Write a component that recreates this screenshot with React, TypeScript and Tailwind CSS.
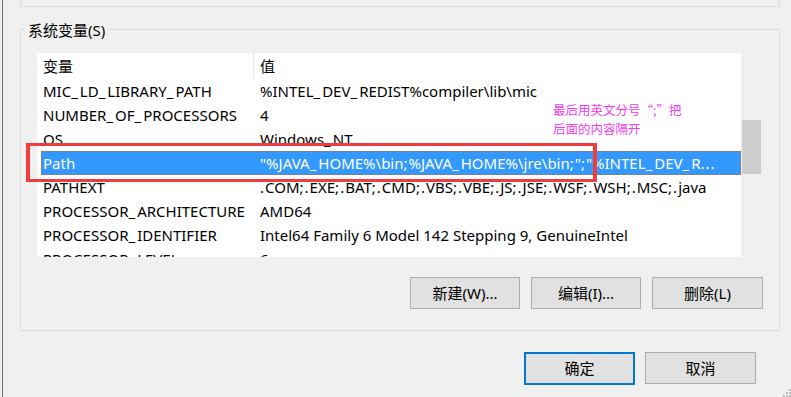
const rows = [
  { name: "MIC_LD_LIBRARY_PATH", value: "%INTEL_DEV_REDIST%compiler\\lib\\mic" },
  { name: "NUMBER_OF_PROCESSORS", value: "4" },
  { name: "OS", value: "Windows_NT" },
  {
    name: "Path",
    value: '"%JAVA_HOME%\\bin;%JAVA_HOME%\\jre\\bin;";"%INTEL_DEV_R...',
    selected: true,
  },
  { name: "PATHEXT", value: ".COM;.EXE;.BAT;.CMD;.VBS;.VBE;.JS;.JSE;.WSF;.WSH;.MSC;.java" },
  { name: "PROCESSOR_ARCHITECTURE", value: "AMD64" },
  { name: "PROCESSOR_IDENTIFIER", value: "Intel64 Family 6 Model 142 Stepping 9, GenuineIntel" },
  { name: "PROCESSOR_LEVEL", value: "6" },
];

// the dialog font sets . ; _ wider than Noto Sans does
function Txt({ s }: { s: string }) {
  return (
    <>
      {s.split(/([._;])/).map((p, i) =>
        p === "_" ? (
          <span key={i} className="tracking-[2px]">{p}</span>
        ) : p === "." || p === ";" ? (
          <span key={i} className="tracking-[1px]">{p}</span>
        ) : (
          p
        )
      )}
    </>
  );
}

function Button({ label, w = "w-[110px]", primary = false }: { label: string; w?: string; primary?: boolean }) {
  return (
    <button
      className={
        "flex items-center justify-center bg-[#e1e1e1] text-[15px] text-black " +
        w +
        (primary ? " h-[33px] border-2 border-[#0078d7]" : " h-[32px] border border-[#adadad]")
      }
    >
      {label}
    </button>
  );
}

export default function App() {
  return (
    <div className="relative flex h-[397px] w-[791px] overflow-hidden bg-[#f0f0f0] font-['Noto_Sans','Noto_Sans_CJK_SC',sans-serif] text-[15px] text-black">
      {/* window edge on the left */}
      <div className="ml-[2px] w-px bg-[#6e6e6e]" />

      <div className="ml-[17px] flex w-[760px] flex-col">
        {/* end of the user variables group */}
        <div className="h-[7px] border-x border-b border-[#dcdcdc]" />

        {/* system variables group */}
        <div className="mt-[22px] flex flex-col border border-[#dcdcdc] pb-[21px]">
          <span className="-mt-[10px] ml-[4px] self-start bg-[#f0f0f0] px-[3px] leading-[20px]">
            系统变量(S)
          </span>

          <div className="ml-[16px] mt-[13px] flex h-[204px] w-[724px]">
            <div className="w-[704px] overflow-hidden bg-white">
              {/* header */}
              <div className="flex h-[26px] items-center">
                <div className="w-[216px] pl-[6px] leading-[26px]">变量</div>
                <div className="h-[25px] w-px self-start bg-[#e5e5e5]" />
                <div className="pl-[6px] leading-[26px]">值</div>
              </div>
              {rows.map((r) => (
                <div
                  key={r.name}
                  className={
                    "ml-[4px] grid h-[24px] grid-cols-[217px_1fr] items-center whitespace-nowrap" +
                    (r.selected ? " border border-dotted border-[#c46a1e] bg-[#3399ff] text-white" : "")
                  }
                >
                  <div className={r.selected ? "pl-px" : "pl-[2px]"}>
                    <Txt s={r.name} />
                  </div>
                  <div className={"overflow-hidden " + (r.selected ? "pl-px" : "pl-[2px]")}>
                    <Txt s={r.value} />
                  </div>
                </div>
              ))}
            </div>
            {/* scrollbar */}
            <div className="w-[20px] pl-px">
              <div className="mt-[67px] h-[54px] w-[19px] bg-[#cdcdcd]" />
            </div>
          </div>

          <div className="mr-[16px] mt-[20px] flex justify-end gap-[11px]">
            <Button label="新建(W)..." />
            <Button label="编辑(I)..." />
            <Button label="删除(L)" w="w-[111px]" />
          </div>
        </div>

        <div className="mr-[24px] mt-[21px] flex justify-end gap-[10px]">
          <Button label="确定" w="w-[111px]" primary />
          <Button label="取消" w="w-[111px]" />
        </div>
      </div>

      {/* annotation overlays */}
      <div className="absolute left-[26px] top-[143px] h-[39px] w-[571px] border-x-[4px] border-y-[3px] border-[#f03c3c]" />
      <div className="absolute left-[553px] top-[100px] font-['Noto_Sans_CJK_SC',sans-serif] text-[12.5px] leading-[19px] text-[#f23cf0]">
        <div>最后用英文分号“;”把</div>
        <div>后面的内容隔开</div>
      </div>

      {/* resize grip */}
      <svg className="absolute bottom-0 right-0" width="10" height="10" viewBox="0 0 10 10">
        <rect x="8" y="2" width="2" height="2" fill="#bcbcbc" />
        <rect x="5" y="5" width="2" height="2" fill="#bcbcbc" />
        <rect x="8" y="5" width="2" height="2" fill="#bcbcbc" />
        <rect x="2" y="8" width="2" height="2" fill="#bcbcbc" />
        <rect x="5" y="8" width="2" height="2" fill="#bcbcbc" />
        <rect x="8" y="8" width="2" height="2" fill="#bcbcbc" />
      </svg>
    </div>
  );
}
